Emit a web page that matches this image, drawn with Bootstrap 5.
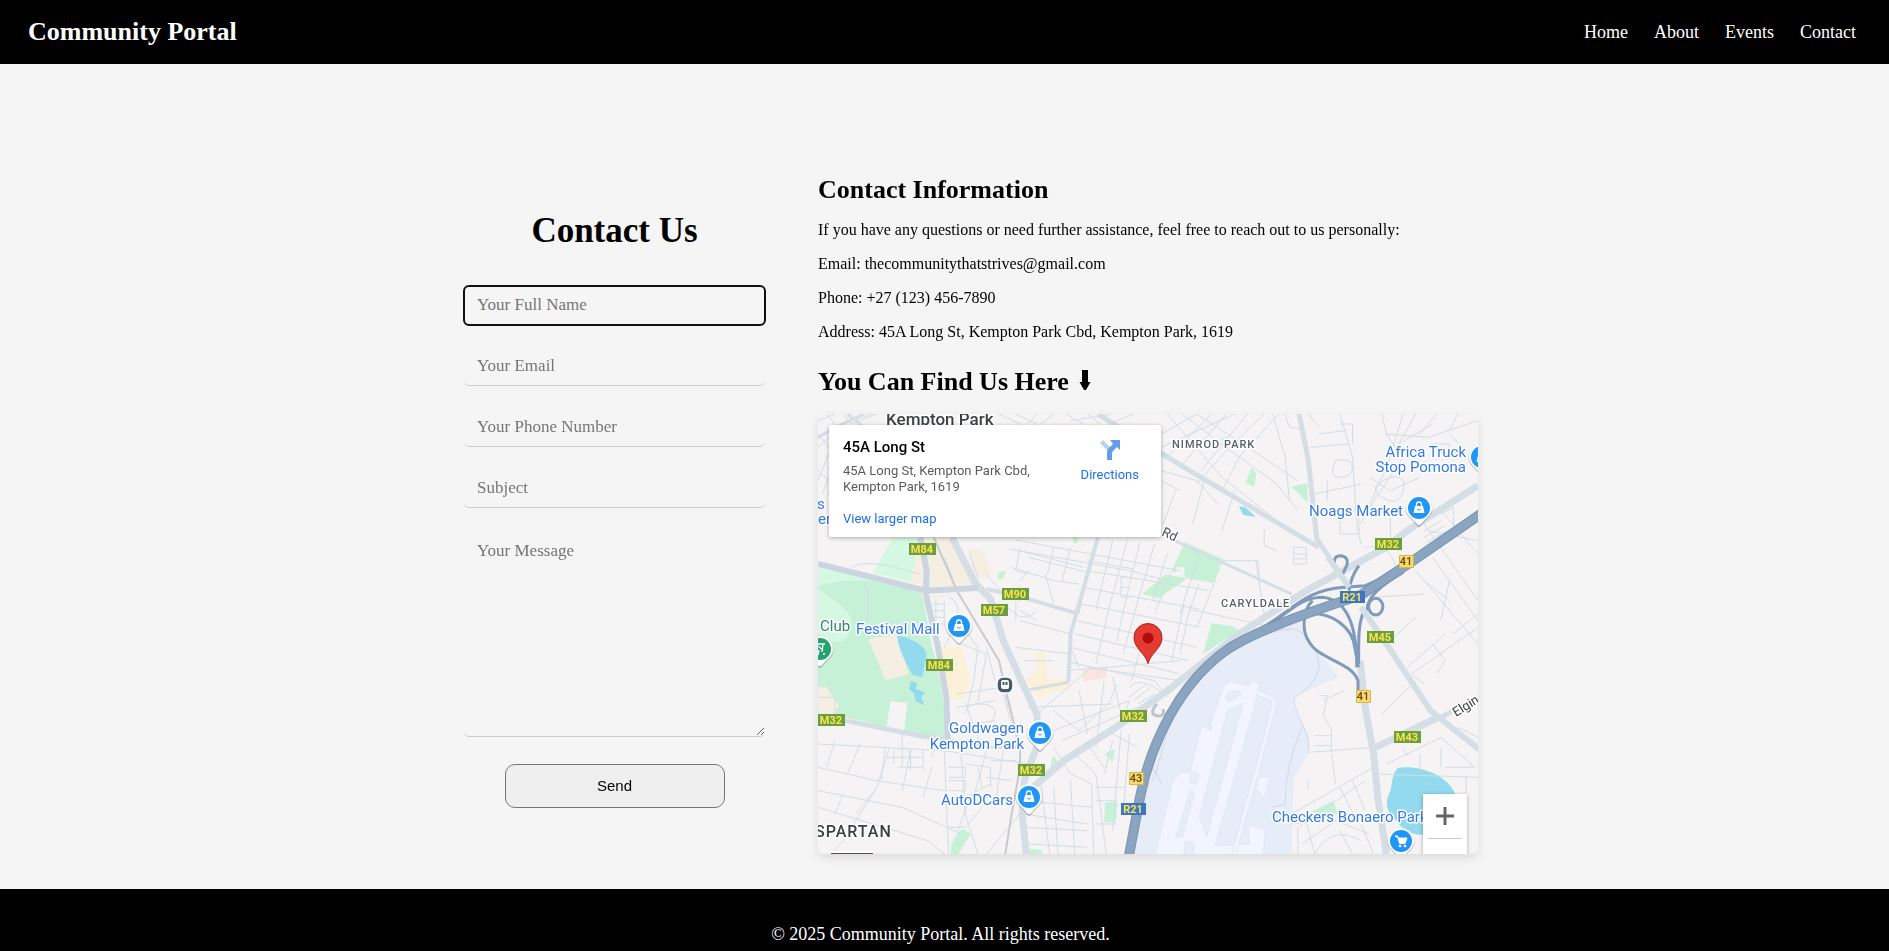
<!DOCTYPE html>
<html lang="en">
<head>
<meta charset="utf-8">
<meta name="viewport" content="width=device-width, initial-scale=1">
<title>Community Portal - Contact</title>
<link href="https://cdn.jsdelivr.net/npm/bootstrap@5.3.0/dist/css/bootstrap.min.css" rel="stylesheet">
<style>
  body { background: #f5f5f5; color: #000; font-family: "Liberation Serif", "Times New Roman", serif; font-size: 16px; line-height: 18px; }
  .site-header { background: #000; min-height: 64px; padding: 0 33px 0 28px; }
  .site-header a { color: #fff; text-decoration: none; font-size: 18px; }
  .site-header .site-title { font-size: 26px; line-height: 30px; font-weight: 700; }
  .site-links { gap: 26px; }
  .page-body { padding: 111px 16px 35px; }
  .contact-wrap { max-width: 1067px; }
  .form-side { flex: 0 1 407px; padding: 36px 53px 0; }
  .info-side { flex: 0 1 660px; min-width: 0; }
  .form-side h1 { font-size: 35px; line-height: 40px; font-weight: 700; margin: 0 0 35px; }
  .form-side form { gap: 22px; }
  .info-side h2 { font-size: 26px; line-height: 30px; font-weight: 700; margin: 0 0 16px; }
  .info-side h2.find-us { margin: 26px 0 17px; }
  .info-side p { margin: 0 0 16px; }
  .form-side .form-control { background: transparent; border: 0; border-bottom: 1px solid #ccc; border-radius: 5px; padding: 9px 13px; font-size: 17px; line-height: 20px; color: #000; box-shadow: none; min-height: 0; }
  .form-side .form-control::placeholder { color: #757575; opacity: 1; }
  .form-side .form-control:focus { outline: 2px solid #101010; outline-offset: -1px; }
  .form-side textarea.form-control { height: 207px; padding-top: 11px; resize: vertical; }
  .send-btn { width: 220px; height: 44px; margin-top: 5px; background: #efefef; border: 1px solid #767676; border-radius: 10px; font: 15px/18px "Liberation Sans", Arial, sans-serif; color: #000; }
  .map-box { height: 440px; border-radius: 5px; background: #f5f3f4; box-shadow: 0 4px 10px rgba(0,0,0,.1); font-family: Roboto, sans-serif; }
  .map-box a { color: #1a73e8; text-decoration: none; }
  .place-card { left: 11px; top: 11px; width: 332px; height: 112px; padding: 13px 14px; background: #fff; border-radius: 2px; box-shadow: 0 1px 4px rgba(0,0,0,.3); font-size: 13px; line-height: 16px; color: #5b5b5b; }
  .place-name { font-size: 15px; line-height: 18px; font-weight: 500; color: #000; margin-bottom: 7px; }
  .directions-icon { margin-bottom: 5px; }
  .zoom-box { right: 11px; bottom: -29px; width: 44px; background: #fff; box-shadow: 0 1px 4px rgba(0,0,0,.3); }
  .zoom-box button { width: 44px; height: 44px; border: 0; background: transparent; padding: 0; display: block; }
  .zoom-box hr { margin: 0 5px; border-color: #ccc; opacity: 1; }
  .shape * { vector-effect: non-scaling-stroke; }
  .poi { fill: #3379e4; font-size: 15px; }
  .halo text { paint-order: stroke; stroke: #fff; stroke-width: 3px; stroke-linejoin: round; }
  .suburb { fill: #5a5f64; font-size: 11px; font-weight: 500; letter-spacing: 1px; }
  .plate { font-size: 11px; font-weight: 700; text-anchor: middle; fill: #fbe34c; }
  .plate-dark { font-size: 11px; font-weight: 500; text-anchor: middle; fill: #5a4a1c; }
  .site-footer { background: #000; color: #fff; font-size: 18px; line-height: 20px; padding: 35px 8px 8px 0; }
</style>
</head>
<body>
<header class="site-header d-flex justify-content-between align-items-center">
  <a class="site-title" href="#">Community Portal</a>
  <nav class="site-links d-flex">
    <a href="#">Home</a><a href="#">About</a><a href="#">Events</a><a href="#">Contact</a>
  </nav>
</header>

<main class="page-body">
  <div class="contact-wrap mx-auto d-flex flex-wrap flex-lg-nowrap justify-content-center">
    <section class="form-side">
      <h1 class="text-center">Contact Us</h1>
      <form class="d-grid" onsubmit="return false">
        <input class="form-control" type="text" placeholder="Your Full Name" aria-label="Your Full Name" autofocus>
        <input class="form-control" type="email" placeholder="Your Email" aria-label="Your Email">
        <input class="form-control" type="tel" placeholder="Your Phone Number" aria-label="Your Phone Number">
        <input class="form-control" type="text" placeholder="Subject" aria-label="Subject">
        <textarea class="form-control" placeholder="Your Message" aria-label="Your Message"></textarea>
        <button class="send-btn mx-auto" type="submit">Send</button>
      </form>
    </section>

    <section class="info-side">
      <h2>Contact Information</h2>
      <p>If you have any questions or need further assistance, feel free to reach out to us personally:</p>
      <p>Email: thecommunitythatstrives@gmail.com</p>
      <p>Phone: +27 (123) 456-7890</p>
      <p>Address: 45A Long St, Kempton Park Cbd, Kempton Park, 1619</p>
      <h2 class="find-us">You Can Find Us Here
        <svg width="12" height="22" viewBox="0 0 12 22" class="align-baseline ms-1" role="img" aria-label="down arrow"><path d="M3 2h6v12h2.500L7 22H5L.5 14H3z"/></svg></h2>

      <div class="map-box position-relative overflow-hidden">
        <svg class="d-block w-100 h-100" viewBox="0 0 660 440" preserveAspectRatio="xMidYMid slice" role="img" aria-label="Map of Kempton Park">
          <defs>
            <g id="drop"><path d="M0-13.500a13.500 13.500 0 0 1 13.500 13.500c0 5-3 8-6 10.500L2 17q-2 2-4 0l-5.500-6.500c-3-2.500-6-5.500-6-10.500A13.500 13.500 0 0 1 0-13.500z" fill="#000" opacity=".2" transform="translate(0 1)"/><path d="M0-13a13 13 0 0 1 13 13c0 5-3 8-6 10.500L2 16q-2 2-4 0l-5-5.500C-10 8-13 5-13 0A13 13 0 0 1 0-13z" fill="#fff"/></g>
            <g id="shop"><use href="#drop"/><circle r="11" fill="#2196f9"/><path d="M-4-2h8l1.500 7h-11z" fill="#fff"/><path d="M-2.500-2v-1.500a2.500 2.500 0 0 1 5 0V-2" fill="none" stroke="#fff" stroke-width="1.300"/><path d="M-1.800 1.200q1.800 2 3.600 0" fill="none" stroke="#2196f9" stroke-width="1"/></g>
          </defs>
          <!-- parks, water and built-up areas -->
          <g class="shape" transform="scale(.42092 .33333)">
            <path fill="#c6f1d7" d="M0 465L80 483 245 535C260 600 262 660 280 740 295 820 305 900 300 970L240 962 65 910 0 895zM872 385L962 435 942 507 885 495 840 470zM770 540L825 482 878 492 810 552zM935 627L985 637 1000 650 915 720zM1030 160l12 20-6 38-20-12zM1125 218l38-12v60zM548 1080L558 1025 580 1055zM680 1020l25-15-5 38zM682 1165h30l-5 60h-27zM345 1245l18 15-30 60h-18q0-50 30-75zM430 475l18-5-10 25h-12zM605 370h15l-5 18h-8zM1170 1195L1225 1160 1235 1200zM955 75l20-8v32zM502 1305l30 3v12h-30z"/>
            <path fill="#d5f8e3" d="M180 370H240L222 505 130 478zM0 462L165 500 110 500 60 500 0 515zM0 520C30 560 90 590 80 640 65 700 40 690 0 660z"/>
            <path fill="#f5efe3" d="M240 370H320L375 510 262 520 240 515 220 505zM355 405h35l25 70-40 30zM120 675L190 662 215 780 160 800zM0 820h20l30 55-20 30-30-10zM240 543l80 0-60 12z"/>
            <path fill="#f5f3f4" d="M172 862L212 866 205 948 163 940zM850 460h20v25h-20z"/>
            <path fill="#fbf0d8" d="M290 698L340 700 362 800 345 855 310 860zM515 715L540 720 545 795 590 792 602 822 550 835 530 858 490 800 520 770z"/>
            <path fill="#fbe3e1" d="M628 768L688 760 684 793 630 802z"/>
            <path fill="#93daee" d="M188 665C220 668 258 700 258 720L248 790 225 782C205 740 190 700 188 665zM220 800L236 808 232 825 255 835 245 850 253 874 232 862 228 838 216 825zM1000 277L1015 280 1040 308 1010 303zM1378 1062C1420 1050 1500 1080 1515 1145V1262H1437C1400 1262 1385 1240 1375 1220 1345 1190 1348 1160 1360 1130 1365 1100 1365 1075 1378 1062z"/>
            <path fill="#e6edf8" d="M1145 620L1150 640C1155 690 1200 720 1235 790L1135 845 1130 880 1165 960 1170 1010 1130 1095 1125 1320H750C760 1150 790 950 880 810 960 690 1060 650 1145 620z"/>
            <path fill="none" stroke="#d2d9e6" d="M780 1060C800 960 860 830 950 740 1020 670 1110 640 1130 645 1170 660 1190 720 1190 760 1180 830 1130 840 1130 860 1140 920 1170 960 1165 1010M1150 940Q1110 1050 1110 1170L1080 1180M780 1120L800 1090 830 950 850 860M790 1060q20 20 25 50"/>
          </g>
          <!-- airport runways -->
          <g transform="translate(322 215) scale(.33333)">
            <path fill="#f2f5ff" stroke="#dde4f1" stroke-width="2" d="M245 190Q250 163 275 160L328 170 334 157 358 165 352 200 225 650 330 645 325 590 375 600 370 680H45L100 455 125 430 150 430 180 308 185 290 215 305 212 283zM380 443l10 5-15 55-15-5 2-10-14-4 10-40z"/>
            <path fill="#e6edf8" stroke="#dde4f1" stroke-width="2" d="M258 210Q260 185 285 185 300 185 305 195L270 218zM310 222L262 245 178 560 200 625zM150 485l15 5-38 135-20 0zM155 430q20-2 22 15l-8 20-20-3zM135 640q20-8 30 5l-8 35h-25z"/>
            <path fill="none" stroke="#dde4f1" stroke-width="14" d="M350 190L390 205Q408 215 400 240L345 445 280 680"/>
            <path fill="none" stroke="#f2f5ff" stroke-width="10" d="M350 190L390 205Q408 215 400 240L345 445 280 680"/>
          </g>
          <g class="shape" fill="none" stroke-linejoin="round" transform="scale(.42092 .33333)">
            <!-- side streets -->
            <path stroke="#d3dde5" stroke-width="1" d="M470 378L860 470M455 405L740 470 830 500M640 440L750 465M640 470L930 530M500 430L640 475M480 400L470 470 500 480M630 520L905 585M625 570L910 640M615 620L900 700M610 660L880 740M600 700L860 780M600 745L800 800 830 850M590 770L690 760 860 740M700 380L660 590M735 375L690 590 660 750M765 385L740 510 710 680M800 390L760 560 725 720M830 420L795 560M840 470L800 600M905 510L880 600 860 720M940 510L900 640M870 570L840 740M900 440L860 600M780 640L745 800M560 400L545 480M600 400L580 500M480 410L630 460M460 460L560 500 620 510M540 480L560 570M480 500L500 470M640 480L620 600M720 490h20M720 520h20M720 550h20M720 490v60M1040 440L1060 600M880 585L1120 650"/>
            <path stroke="#d3dde5" stroke-width="1" d="M830 0L905 110 960 190 1100 330M865 0L980 110 1090 210 1140 290M900 0L1010 90 1140 200M935 0L830 130M970 0L860 160M1020 0L910 170M1060 0L970 110 900 210M1095 0L1000 130 960 230M1080 0L1110 130 1120 260M815 60L900 0M815 100L990 0M1110 0L1120 40 1155 45M1165 0L1190 40M1240 0L1270 130 1280 330 1290 390M1190 60L1250 50M1170 100L1260 90M1180 240L1290 210M1340 0L1350 60 1390 130 1300 300M1390 0L1350 160 1290 330M1420 0L1380 90 1460 30M1350 60L1450 70 1568 20M1470 0L1430 60M1520 0L1500 50M1500 60L1540 110M1460 90h40v30M1230 140q40-10 40 20t-30 30-10-50M1360 190q40-10 30 40t-50 20 20-60M1310 190L1360 230 1430 190M1240 290h45v70h-45zM1310 300h50v90M1300 400q60-10 70 50t-60 70M1240 30h30v60M1210 200v60M815 170L900 200 950 270M850 230L820 330M815 200L860 230M920 190L890 330M990 230L960 350"/>
            <path stroke="#d3dde5" stroke-width="1" d="M1440 330L1568 560M1480 290L1568 420M1450 350L1568 380M1460 430L1568 620M1440 350l40-30M1440 370l50-35M1445 385l50-35M1450 395l50-35M1480 300l30-20v60M960 440L1045 440 1050 510M1060 345v50l30 15M1130 400h30v50h-30zM1130 420h30M1130 435h30M1420 470L1568 690M1440 500L1500 560M1500 500L1480 620M1320 550L1440 540M1360 680L1420 610M1410 780L1568 640M1410 780L1440 810M1400 760l90-100M1460 690l30 50M1490 740l-20 40M1568 600l-60 60M1420 800L1340 900M1190 845h20l-10 60 20 40v70M1200 860l50-30M1180 965h40v30h-40M1165 1015L1320 1000M1220 1020l10 90M1165 1100v25M1125 1200L1320 1060M1140 1240L1300 1100M1240 1120l40 100M1270 1100l30 90M1125 1230L1310 1200M1150 1290L1230 1220 1310 1260M1180 1320Q1220 1230 1290 1280M1140 1240v80M1160 1220l20 100M1240 1250l30 70M1290 1230l30 90M1330 1080L1568 1090M1350 1050L1480 970 1560 1060 1490 1060M1480 1000v60M1430 1020v40M1390 1000l10 25M1540 1090v60M1520 940l48 30"/>
            <path stroke="#d3dde5" stroke-width="1" d="M0 20L40 0M0 100L60 30 130 0M20 0L60 60M60 0l20 30M80 30l60-30M0 200L25 120M0 170l26 30M0 60l26 40M10 240l15-50M430 0L480 30M470 0L520 30M520 0l-20 30M560 0l-30 30M590 0l40 30M640 0l30 30M690 30l60-30M600 20l100-20M80 460Q120 430 240 480M110 500Q130 580 110 640L120 670M280 555v90M300 560v80M272 570h30M272 590h30M272 610h30M272 630h30M310 550Q340 560 330 620L300 700M350 650L380 700 370 800 350 900M400 700L420 800M340 690L400 720 380 860M330 840L440 820M330 880L420 860M360 900q-15-30 20-30t40 20-20 50-40-40M320 940L420 920M380 940v60M400 590q30-40 60 0t60 0M470 560v60M480 590l40 30M400 480l40 60 40 20M360 420l20 70M300 430l20 60M480 620L600 660M470 700L600 720M490 740L560 740M500 880L700 870M520 900L640 770M560 890l60 60 70-80 20-60M620 830L640 960M600 700l20 60M700 790L720 900M560 950L740 860M580 980L760 880M640 760L860 800M680 800L660 1000M740 820q20-30 60 0t-20 60-40-20M740 850l40-40M750 860l40-40M760 870l40-30M560 1000L600 1080 650 1110 655 1320M610 1020l50 60 25 240M640 990l40 70M700 960L760 1000M720 950L700 1250M700 980L680 1080M740 960L725 1200"/>
            <path stroke="#d3dde5" stroke-width="1" d="M0 990L300 1010 500 1050M0 1060L140 1100 300 1130M0 1130L200 1180 340 1260M0 1180L260 1280 300 1320M40 980L20 1060M100 990L70 1080M170 1000L140 1120 60 1280 30 1320M160 1000L150 1100M220 1010L200 1130M300 1010L310 1320M340 1020L350 1200 380 1320M400 1010L370 1150M160 1030h90M180 1010v40M200 1010v50M220 1010v60M250 1010v60M190 1060h60M310 1060h40v30h-40M310 1100h40v30h-40M350 1050l60 10v60M380 1060l10 60M350 1150l60-40M270 1060l-20 90M140 1120L90 1200M60 1140l-20 60M360 1150L330 1260M310 1240h40l40-60M400 1150l60 20M440 1010L420 1180M410 1040h60M400 1090l60 10M480 1200L400 1320M490 1160L650 1180M490 1200L640 1230M490 1240L640 1250M500 1290L640 1300M530 1110l20 210M560 1120l10 200M600 1100l10 220M520 1120l-40 100M200 960v50M190 1010q20-20 30 10v40M280 980l-10 50M0 850h40v40M660 1120h70M660 1160h50M660 1230h50"/>
            <!-- railway -->
            <path stroke="#c9cacd" stroke-width="2" d="M275 370L330 530 430 740 450 850 480 1000 480 1060 460 1200 445 1320"/>
            <path stroke="#d5d6d8" stroke-width="3" stroke-dasharray="1 1" d="M440 830L455 900 475 980"/>
            <!-- main roads -->
            <path stroke="#d5dee5" stroke-width="3" d="M830 370L1125 540M600 590L615 598M595 805L490 830M300 975L400 1000 490 1000M0 70L65 25 110 0M70 0L110 40"/>
            <path stroke="#d5dee5" stroke-width="4" d="M665 370L600 660 595 805M400 525L480 548 615 598"/>
            <path stroke="#d5dee5" stroke-width="5" d="M665 0L870 160 1190 400M1143 0L1165 140 1185 375 1215 430M0 915L65 920 240 965 300 975M1480 910L1568 850"/>
            <path stroke="#d5dee5" stroke-width="7" d="M1568 215L1400 350 1350 400 1160 530 1000 660 830 830 720 930 590 1035 510 1120M318 370L375 510 410 555 440 680 490 820 520 900 525 980 490 1100 485 1200 495 1320M1288 740L1300 880 1320 1020 1330 1150 1350 1320M1470 912L1325 1000"/>
            <path stroke="#cbd5e0" stroke-width="6" d="M243 370L258 470 256 540 285 700 305 850 308 975M0 450L130 490 255 530 380 522"/>
            <path stroke="#bcc5cf" stroke-width="3" d="M805 870q-20 30 0 35t15-20"/>
            <!-- interchange and freeway -->
            <g stroke="#7f9aba" stroke-width="3">
              <path d="M1050 645C1130 590 1150 530 1250 520L1300 515 1400 460M1060 640C1120 600 1140 550 1200 550 1260 560 1280 640 1280 760M1175 560C1150 590 1150 650 1165 680 1190 740 1265 740 1283 800V830M1155 600C1220 590 1270 640 1275 700L1284 760M1297 590C1280 640 1286 700 1284 750M1252 505L1228 455Q1222 425 1242 425 1262 428 1256 455L1246 482M1285 455Q1265 490 1262 530M1305 590Q1300 540 1390 475"/>
              <ellipse cx="1325" cy="578" rx="17" ry="25"/>
            </g>
            <path stroke="#7893b2" stroke-width="10" d="M1580 295L1400 452 1290 543C1180 590 1060 640 980 700 860 800 790 990 765 1150L738 1330"/>
            <path stroke="#8ba5c1" stroke-width="8" d="M1580 295L1400 452 1290 543C1180 590 1060 640 980 700 860 800 790 990 765 1150L738 1330"/>
            <path stroke="#d5dee5" stroke-width="6" d="M1212 430L1262 520M1290 580L1340 670 1455 890 1480 915 1580 1015"/>
          </g>
          <!-- place labels -->
          <g class="halo">
            <text x="68" y="11" font-size="17" font-weight="500" fill="#3c4043">Kempton Park</text>
            <text x="-3" y="423" font-size="16" font-weight="500" fill="#3c4043" letter-spacing="1">SPARTAN</text>
            <text class="suburb" x="354" y="34">NIMROD PARK</text>
            <text class="suburb" x="403" y="193">CARYLDALE</text>
            <text x="343" y="121" font-size="13" fill="#4b5055" transform="rotate(25 343 121)">Rd</text>
            <text x="638" y="303" font-size="13" fill="#3c4043" transform="rotate(-32 638 303)">Elgin St</text>
            <g class="poi">
              <text x="2" y="217" fill="#34856a">Club</text>
              <text x="38" y="220">Festival Mall</text>
              <text x="-1" y="95">s W</text><text x="0" y="110">er</text>
              <g text-anchor="end">
                <text x="648" y="43">Africa Truck</text><text x="648" y="58">Stop Pomona</text>
                <text x="585" y="102">Noags Market</text>
                <text x="206" y="319">Goldwagen</text><text x="206" y="335">Kempton Park</text>
                <text x="195" y="391">AutoDCars</text>
              </g>
              <text x="454" y="408">Checkers Bonaero Park</text>
            </g>
          </g>
          <!-- route plates -->
          <g fill="#6b9e43"><path d="M91 129h27v12H91zM184 174h27v12h-27zM163 190h27v12h-27zM108 245h27v12h-27zM0 300h27v12H0zM302 296h27v12h-27zM200 350h27v12h-27zM557 124h27v12h-27zM549 217h27v12h-27zM576 317h27v12h-27z"/></g>
          <g fill="#3e76c4"><path d="M522 177h25v12h-25zM303 389h25v12h-25z"/></g>
          <g fill="#fdd96b" stroke="#dcb54a"><path d="M581.500 141.500h14v12h-14zM538.500 276.500h14v12h-14zM311.500 358.500h14v12h-14z"/></g>
          <g class="plate">
            <text x="104" y="139">M84</text><text x="197" y="184">M90</text><text x="176" y="200">M57</text><text x="121" y="255">M84</text><text x="13" y="310">M32</text><text x="315" y="306">M32</text><text x="213" y="360">M32</text><text x="570" y="134">M32</text><text x="562" y="227">M45</text><text x="589" y="327">M43</text><text x="534" y="187">R21</text><text x="315" y="399">R21</text>
          </g>
          <g class="plate-dark"><text x="588" y="151">41</text><text x="545" y="286">41</text><text x="318" y="368">43</text></g>
          <!-- shops, station and the address pin -->
          <use href="#shop" x="141" y="212"/><use href="#shop" x="601" y="94"/><use href="#shop" x="222" y="319"/><use href="#shop" x="211" y="383"/><use href="#shop" x="664" y="43"/>
          <g transform="translate(583 427)"><use href="#drop"/><circle r="11" fill="#2196f9"/><path d="M-6-5h2.500L-1.500 2.500H4L6-3h-8.500z" fill="#fff" stroke="#fff"/><circle cx="-1" cy="5" r="1.300" fill="#fff"/><circle cx="4" cy="5" r="1.300" fill="#fff"/></g>
          <g transform="translate(2 235)"><use href="#drop"/><circle r="11" fill="#24a26f"/><path d="M-4-5h9M3-5L2 3M-2-3L3 1M-1 1l-1 5" fill="none" stroke="#fff" stroke-width="1.300"/><circle cx="4" cy="5" r="1" fill="#fff"/></g>
          <g transform="translate(187 271)"><rect x="-8" y="-8" width="16" height="16" rx="6" fill="#455b71" stroke="#fff" stroke-width="1.500"/><rect x="-4" y="-5" width="8" height="9" rx="2" fill="#fff"/><path d="M-2.500-3h2v3h-2zM.5-3h2v3h-2zM-3 5.500l1.500-1.500h3L3 5.500z" fill="#455b71"/></g>
          <path d="M330 209.500a14 14 0 0 1 14 14c0 11-11 15-14 26-3-11-14-15-14-26a14 14 0 0 1 14-14z" fill="#e53b32" stroke="#b81c1c"/><circle cx="330" cy="224" r="5.500" fill="#b00d12"/>
          <rect x="12" y="437" width="44" height="6" rx="2" fill="#fff"/><path d="M13 439h42v2H13z" fill="#5b5148"/>
        </svg>

        <div class="place-card position-absolute d-flex justify-content-between">
          <div>
            <div class="place-name">45A Long St</div>
            <div>45A Long St, Kempton Park Cbd,<br>Kempton Park, 1619</div>
            <a class="d-inline-block mt-3" href="#">View larger map</a>
          </div>
          <a class="text-center px-2" href="#">
            <svg class="directions-icon d-block mx-auto" width="22" height="24" viewBox="0 0 22 24" aria-hidden="true"><path d="M1 5l3-3 7 7v5L9 13z" fill="#b9d0f3"/><path d="M8 22v-8q0-3 3-5l3-3-3-4h10v10l-3-3-4 4q-1 1-1 3v6z" fill="#669de8"/></svg>
            Directions</a>
        </div>
        <div class="zoom-box position-absolute">
          <button type="button" aria-label="Zoom in"><svg width="18" height="18" viewBox="0 0 18 18"><path d="M0 7.500h7.500V0h3v7.500H18v3h-7.500V18h-3v-7.500H0z" fill="#666"/></svg></button>
          <hr>
          <button type="button" aria-label="Zoom out"><svg width="18" height="18" viewBox="0 0 18 18"><path d="M0 7.500h18v3H0z" fill="#666"/></svg></button>
        </div>
      </div>
    </section>
  </div>
</main>

<footer class="site-footer text-center">© 2025 Community Portal. All rights reserved.</footer>
<script src="https://cdn.jsdelivr.net/npm/bootstrap@5.3.0/dist/js/bootstrap.bundle.min.js"></script>
</body>
</html>
